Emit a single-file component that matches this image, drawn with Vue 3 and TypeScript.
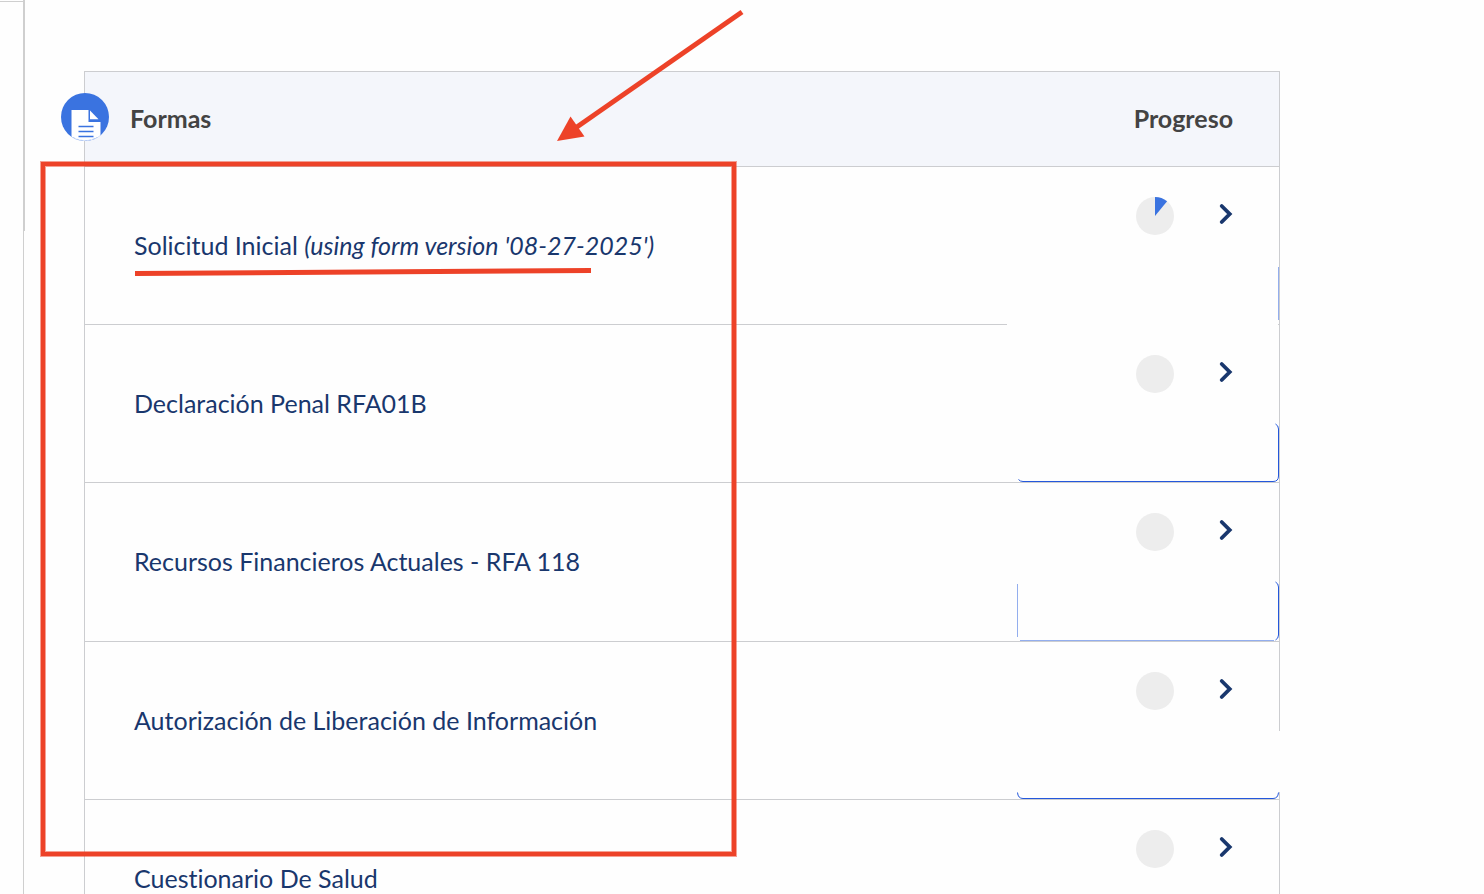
<script setup lang="ts">
interface Stroke {
  d: string
  soft?: boolean
}

interface FormRow {
  title: string
  note?: string
  percent: number
  strokes: Stroke[]
  cover?: string
}

const rows: FormRow[] = [
  {
    title: 'Solicitud Inicial',
    note: "(using form version '08-27-2025')",
    percent: 11,
    strokes: [{ d: 'M261.5 14V67', soft: true }],
    cover: 'M-10 71.5H261',
  },
  {
    title: 'Declaración Penal RFA01B',
    percent: 0,
    strokes: [{ d: 'M258.5 13Q261.5 14.5 261.5 18V65Q261.5 70.5 256 70.5H6Q3 70.5 1.5 68.5' }],
  },
  {
    title: 'Recursos Financieros Actuales - RFA 118',
    percent: 0,
    strokes: [
      { d: 'M0.5 14V67', soft: true },
      { d: 'M3 70.5H257', soft: true },
      { d: 'M258.5 12Q261.5 13.5 261.5 17V65Q261.5 68.5 258.5 70' },
    ],
  },
  {
    title: 'Autorización de Liberación de Información',
    percent: 0,
    strokes: [{ d: 'M0.5 64.5Q1 70.5 6 70.5H256Q261 70.5 261.5 64.5' }],
    cover: 'M262.5 3V64',
  },
  { title: 'Cuestionario De Salud', percent: 0, strokes: [] },
]

function slice(percent: number): string {
  const a = (percent / 100) * Math.PI * 2
  return `M19 19V0A19 19 0 0 1 ${19 + 19 * Math.sin(a)} ${19 - 19 * Math.cos(a)}Z`
}
</script>

<template>
  <div class="page">
    <aside class="rail"><div class="rail-top"></div></aside>
    <main class="main">
      <table class="forms">
        <thead>
          <tr>
            <th scope="col" class="name">
              <svg class="badge" viewBox="0 0 48 48" aria-hidden="true">
                <defs>
                  <clipPath id="disc"><circle cx="24" cy="24" r="24" /></clipPath>
                </defs>
                <circle cx="24" cy="24" r="24" fill="#3a73e0" />
                <g clip-path="url(#disc)">
                  <path d="M10.5 17H27.5V29H39.5V48H10.5Z" fill="#fff" />
                  <path d="M29 17.5L37.5 26.3H29Z" fill="#fff" />
                  <path d="M17.5 33.5H32.5M17.5 38.5H32.5M17.5 43.5H32.5" stroke="#3a73e0" stroke-width="1.3" />
                </g>
                <path d="M12 44.3A23.6 23.6 0 0 0 36 44.3" fill="none" stroke="#a9c3f3" stroke-width="0.8" stroke-dasharray="3 1" />
              </svg>
              Formas
            </th>
            <th scope="col" class="progress-head">Progreso</th>
          </tr>
        </thead>
        <tbody>
          <tr v-for="row in rows" :key="row.title">
            <td class="name">
              <a href="#">{{ row.title }} <em v-if="row.note">{{ row.note }}</em></a>
            </td>
            <td class="progress">
              <div class="status">
                <svg class="pie" viewBox="0 0 38 38" role="img" :aria-label="row.percent + '%'">
                  <circle cx="19" cy="19" r="19" fill="#ededed" />
                  <path v-if="row.percent" :d="slice(row.percent)" fill="#3a73e0" />
                </svg>
                <a href="#" class="open" :aria-label="row.title">
                  <svg viewBox="0 0 14 22" aria-hidden="true">
                    <path d="M2.7 3L10.7 11L2.7 19" />
                  </svg>
                </a>
              </div>
              <svg class="outline" viewBox="0 0 263 72" aria-hidden="true">
                <path v-if="row.cover" :d="row.cover" class="cover" />
                <path v-for="s in row.strokes" :key="s.d" :d="s.d" :class="{ soft: s.soft }" />
              </svg>
            </td>
          </tr>
        </tbody>
      </table>
    </main>
    <svg class="marks" aria-hidden="true">
      <rect x="43" y="164" width="691" height="690" class="halo" />
      <rect x="43" y="164" width="691" height="690" class="line" />
      <path d="M742 12L574 129" class="stroke" />
      <path d="M135 273.5L591 270.5" class="stroke" />
      <path d="M557 141L570.5 116.5L584.5 136.5Z" class="head" />
    </svg>
  </div>
</template>

<style>
body {
  margin: 0;
  background: #fefefe;
}
</style>

<style scoped>
.page {
  position: relative;
  display: flex;
  height: 100vh;
  overflow: hidden;
  background: #fefefe;
  font-family: Lato, "Open Sans", sans-serif;
  font-size: 25px;
  font-variant-ligatures: none;
  line-height: 32px;
  color: #434343;
}

.rail {
  flex: none;
  box-sizing: border-box;
  width: 24px;
  border-right: 1px solid #cfcfcf;
}

.rail-top {
  box-sizing: border-box;
  width: 25px;
  height: 231px;
  border-right: 2px solid #cfcfcf;
  background: linear-gradient(#cfcfcf, #cfcfcf) 0 1px / 100% 1px no-repeat;
}

.main {
  flex: 1;
  padding: 71px 204px 0 60px;
}

.forms {
  width: 100%;
  border: 1px solid #cccdd0;
  border-bottom: 0;
  border-collapse: separate;
  border-spacing: 0;
}

.forms tr {
  position: relative;
}

.forms th,
.forms td {
  box-sizing: border-box;
  padding: 0 0 2px;
  border-bottom: 1px solid #cccdd0;
  text-align: left;
}

.forms th {
  height: 95px;
  background: #f4f6fb;
  font-weight: 700;
}

.forms td {
  height: 158px;
}

.forms tr:nth-child(3) td {
  height: 159px;
}

.forms th.name {
  padding-left: 45px;
}

.forms td.name {
  padding-left: 49px;
}

.forms th.progress-head {
  padding-right: 46px;
  text-align: right;
}

.forms td.progress {
  vertical-align: top;
}

.badge {
  position: absolute;
  top: 21px;
  left: -24px;
  width: 48px;
  height: 48px;
}

a {
  color: #19376d;
  text-decoration: none;
}

.status {
  display: flex;
  justify-content: flex-end;
  gap: 45px;
  padding: 30px 46px 0 0;
}

.pie {
  width: 38px;
  height: 38px;
}

.open {
  width: 14px;
  height: 34px;
  display: flex;
  align-items: center;
}

.open svg {
  width: 14px;
  height: 22px;
}

.open path {
  fill: none;
  stroke: #19376d;
  stroke-width: 3.8;
  stroke-linecap: round;
  stroke-linejoin: miter;
}

.outline {
  position: absolute;
  right: -1px;
  bottom: 0;
  width: 263px;
  height: 72px;
  overflow: visible;
  pointer-events: none;
}

.outline path {
  fill: none;
  stroke: #2458dc;
  stroke-width: 1;
}

.outline path.soft {
  stroke: #93aeee;
}

.outline path.cover {
  stroke: #fefefe;
}

.marks {
  position: absolute;
  top: 0;
  left: 0;
  width: 100%;
  height: 100%;
  pointer-events: none;
}

.halo {
  fill: none;
  stroke: #ed4228;
  stroke-opacity: 0.5;
  stroke-width: 6;
}

.line {
  fill: none;
  stroke: #ed4228;
  stroke-width: 4;
}

.stroke {
  fill: none;
  stroke: #ed4228;
  stroke-width: 5;
}

.head {
  fill: #ed4228;
}
</style>
